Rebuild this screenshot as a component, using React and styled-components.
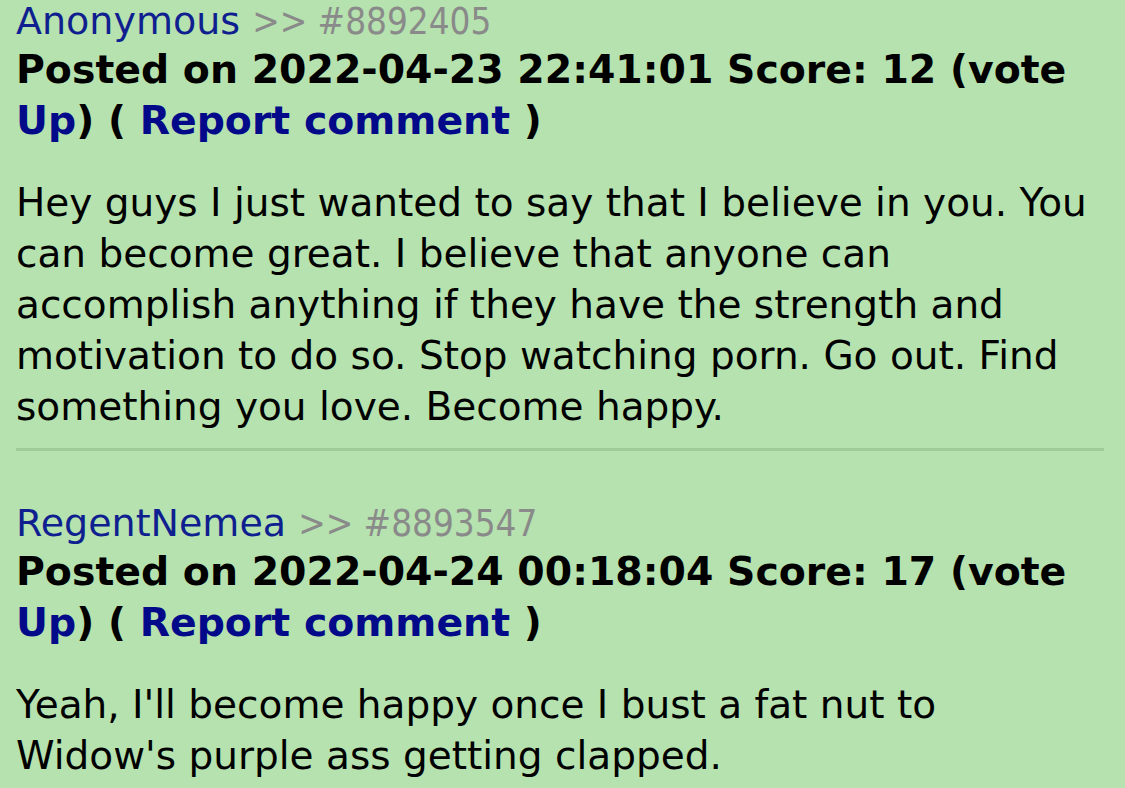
import React from 'react';
import styled, { createGlobalStyle } from 'styled-components';

const GlobalStyle = createGlobalStyle`
    html, body {
        margin: 0;
        padding: 0;
        background: #b5e2ae;
    }
    body {
        font-family: "DejaVu Sans", Verdana, sans-serif;
        color: #000000;
    }
`

const Page = styled.div`
    width: 1088px;
    padding: 2px 16px 0 16px;
    font-size: 39px;
    line-height: 51px;
`

const Comment = styled.div`
    display: flex;
    flex-direction: column;
`

// name line sits a bit tighter than the rest
const Header = styled.div`
    font-size: 38px;
    line-height: 38px;
    margin-bottom: 3px;
    white-space: nowrap;
`

const Author = styled.a`
    color: #0f1f8f;
    text-decoration: none;
`

const PostId = styled.span`
    font-family: "DejaVu Sans Condensed", "DejaVu Sans", sans-serif;
    font-stretch: condensed;
    font-size: 36.5px;
    color: #8a8a8a;
`

const Meta = styled.div`
    font-weight: bold;
    font-size: 39.4px;
`

const MetaLink = styled.a`
    color: #020a8a;
    text-decoration: none;
`

const Body = styled.p`
    margin: 31px 0 0 0;
`

const Divider = styled.hr`
    margin: 16px 0 53px 0;
    height: 3px;
    border: none;
    background: #9fcb98;
`

const comments = [
    {
        author: 'Anonymous',
        id: '8892405',
        date: '2022-04-23 22:41:01',
        score: 12,
        text: 'Hey guys I just wanted to say that I believe in you. You can become great. I believe that anyone can accomplish anything if they have the strength and motivation to do so. Stop watching porn. Go out. Find something you love. Become happy.',
    },
    {
        author: 'RegentNemea',
        id: '8893547',
        date: '2022-04-24 00:18:04',
        score: 17,
        text: "Yeah, I'll become happy once I bust a fat nut to Widow's purple ass getting clapped.",
    },
]

export default function App(){
    return (
        <>
            <GlobalStyle />
            <Page>
                {comments.map((c, i) => (
                    <React.Fragment key={c.id}>
                        {i > 0 && <Divider />}
                        <Comment>
                            <Header>
                                <Author href="#">{c.author}</Author>{' '}
                                <PostId>&gt;&gt; #{c.id}</PostId>
                            </Header>
                            <Meta>
                                Posted on {c.date} Score: {c.score} (vote <MetaLink href="#">Up</MetaLink>) ( <MetaLink href="#">Report comment</MetaLink> )
                            </Meta>
                            <Body>{c.text}</Body>
                        </Comment>
                    </React.Fragment>
                ))}
            </Page>
        </>
    )
}
